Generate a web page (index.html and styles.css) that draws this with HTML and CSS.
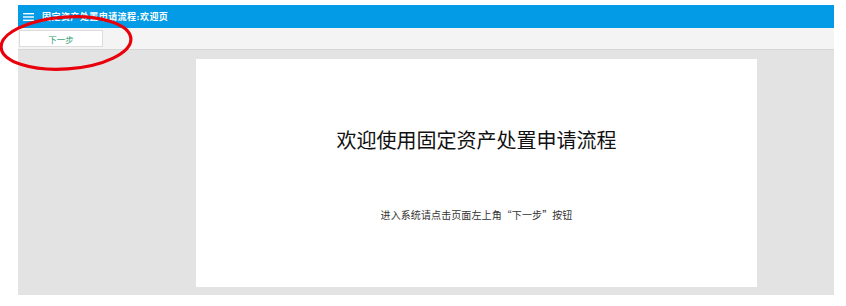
FILE: index.html
```html
<!DOCTYPE html>
<html lang="zh-CN">
<head>
    <meta charset="UTF-8">
    <meta name="viewport" content="width=device-width, initial-scale=1.0">
    <title>固定资产处置申请流程</title>
    <link rel="stylesheet" href="styles.css">
</head>
<body>
    <div class="frame">
        <div class="topbar">
            <svg class="menu" width="11" height="8" viewBox="0 0 11 8">
                <rect x="0" y="0" width="11" height="1.4" fill="#fff"/>
                <rect x="0" y="3.3" width="11" height="1.4" fill="#fff"/>
                <rect x="0" y="6.6" width="11" height="1.4" fill="#fff"/>
            </svg>
            <div class="title">固定资产处置申请流程:欢迎页</div>
        </div>
        <div class="toolbar">
            <div class="next-btn">下一步</div>
        </div>
        <div class="content">
            <div class="card">
                <div class="welcome">欢迎使用固定资产处置申请流程</div>
                <div class="hint">进入系统请点击页面左上角“下一步”按钮</div>
            </div>
        </div>
    </div>

    <!-- annotation circle -->
    <svg class="mark" width="140" height="64" viewBox="0 0 140 64">
        <ellipse cx="67" cy="32" rx="65" ry="26" fill="none" stroke="#e8000b" stroke-width="3.2" transform="rotate(-4 67 32)"/>
    </svg>
</body>
</html>
```

FILE: styles.css
```css
body {
    margin: 5px 12px 11px 18px;
    background-color: #fff;
    font-family: "Liberation Sans", "Noto Sans CJK SC", sans-serif;
}
.frame {
    width: 816px;
    display: flex;
    flex-direction: column;
}
.topbar {
    height: 23px;
    background-color: #039be5;
    display: flex;
    align-items: center;
    padding-left: 5px;
}
.menu {
    display: block;
    margin-right: 8px;
}
.title {
    color: #fff;
    font-family: "Liberation Serif", "Noto Sans CJK SC", serif;
    font-weight: bold;
    font-size: 9px;
    letter-spacing: 0.45px;
}
.toolbar {
    height: 21px;
    background-color: #f4f4f4;
    border-bottom: 1px solid #d6d6d6;
    display: flex;
    align-items: center;
    padding-left: 1px;
}
.next-btn {
    width: 82px;
    height: 15px;
    background-color: #fff;
    border: 1px solid #dcdcdc;
    color: #2a9a6c;
    font-family: "Noto Sans CJK SC", sans-serif;
    font-size: 8.5px;
    display: flex;
    align-items: center;
    justify-content: center;
}
.content {
    background-color: #e3e3e3;
    padding: 9px 77px 8px 178px;
}
.card {
    height: 228px;
    background-color: #fff;
    display: flex;
    flex-direction: column;
    align-items: center;
}
.welcome {
    margin-top: 66px;
    font-size: 20px;
    color: #111;
    font-family: "Liberation Serif", "Noto Sans CJK SC", serif;
}
.hint {
    margin-top: 53px;
    font-family: "Noto Sans CJK SC", sans-serif;
    font-size: 10px;
    letter-spacing: 0.1px;
    color: #333;
}
.mark {
    position: absolute;
    left: -1px;
    top: 11px;
}
```
